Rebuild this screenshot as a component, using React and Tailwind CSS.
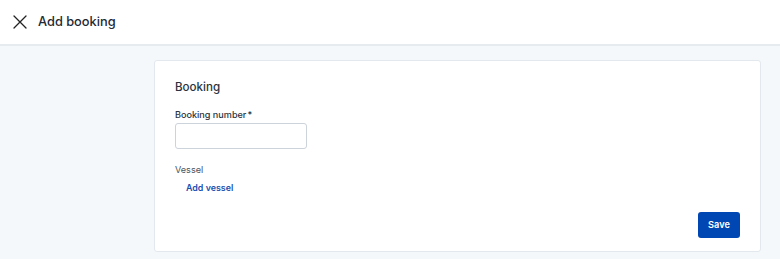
import React from 'react';

export default function App() {
  return (
    <div className="w-[780px] h-[259px] bg-[#f5f8fb] font-['Inter',sans-serif] text-[#1f2933] overflow-hidden">
      <div className="h-[46px] bg-white border-b-2 border-[#e6ebf0] flex items-center">
        <button className="ml-[12px] w-[16px] h-[16px] flex items-center justify-center text-[#222]">
          <svg width="14" height="14" viewBox="0 0 14 14" fill="none" stroke="currentColor" strokeWidth="1.3" strokeLinecap="round">
            <path d="M1 1L13 13M13 1L1 13" />
          </svg>
        </button>
        <span className="ml-[10px] text-[12.8px] font-medium">Add booking</span>
      </div>
      <div className="ml-[154px] mt-[14px] w-[607px] h-[192px] bg-white border border-[#e3e8ee] rounded-[3px] pl-[20px] pr-[20px] pt-[19px] flex flex-col">
        <div className="text-[11.6px] font-medium text-[#2a3440] leading-[14px]">Booking</div>
        <label className="mt-[15px] text-[9.1px] font-medium text-[#2a3440] leading-[12px]">Booking number<span className="ml-[1px]">*</span></label>
        <input className="mt-[2px] w-[132px] h-[26px] border border-[#ccd3db] rounded-[3px] outline-none" />
        <div className="mt-[15px] text-[9.1px] text-[#4a5561] leading-[12px]">Vessel</div>
        <button className="ml-[11px] mt-[6px] self-start text-[8.9px] font-semibold text-[#1a4fb0] leading-[12px]">Add vessel</button>
        <div className="flex justify-end mt-[18px]">
          <button className="w-[42px] h-[26px] bg-[#0047b3] rounded-[3px] text-white text-[9.2px] font-semibold">Save</button>
        </div>
      </div>
    </div>
  );
}
